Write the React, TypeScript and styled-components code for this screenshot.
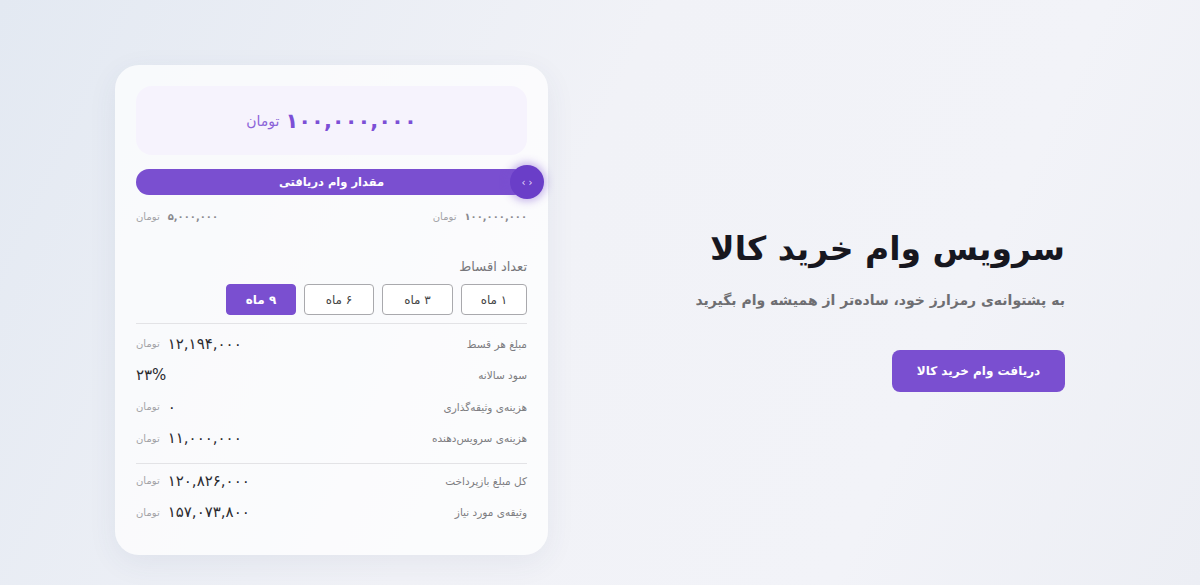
import React from 'react';
import styled, { createGlobalStyle } from 'styled-components';

const GlobalStyle = createGlobalStyle`
    html, body {
        margin: 0;
        padding: 0;
    }
    body {
        font-family: "DejaVu Sans", "Noto Sans", sans-serif;
        background: linear-gradient(115deg, #e3e9f2 0%, #f1f2f7 45%, #f2f3f8 75%, #eceef4 100%);
        min-height: 585px;
    }
`;

const PURPLE = '#7a4fd0';

const Page = styled.main`
    direction: rtl;
    height: 585px;
    display: flex;
    align-items: center;
    justify-content: space-between;
    padding: 35px 135px 0 115px;
    box-sizing: border-box;
`;

const Hero = styled.section`
    display: flex;
    flex-direction: column;
    align-items: flex-start;
`;

const Title = styled.h1`
    margin: 0;
    font-size: 33px;
    font-weight: 700;
    color: #17171f;
    line-height: 1.3;
`;

const Subtitle = styled.p`
    margin: 22px 0 0;
    font-size: 14px;
    font-weight: 700;
    color: #6e6e72;
`;

const CtaButton = styled.button`
    margin-top: 42px;
    width: 173px;
    height: 42px;
    border: none;
    border-radius: 8px;
    background: ${PURPLE};
    color: #fff;
    font-family: inherit;
    font-size: 12px;
    font-weight: 700;
    cursor: pointer;
`;

const Card = styled.section`
    width: 433px;
    height: 490px;
    box-sizing: border-box;
    padding: 21px 21px;
    border-radius: 24px;
    background: rgba(255, 255, 255, 0.72);
    box-shadow: 0 8px 30px rgba(60, 70, 110, 0.07);
    display: flex;
    flex-direction: column;
`;

const AmountBox = styled.div`
    height: 69px;
    border-radius: 16px;
    background: #f6f3fd;
    display: flex;
    align-items: center;
    justify-content: center;
    gap: 6px;
`;

const BigNumber = styled.span`
    font-size: 21px;
    font-weight: 700;
    color: #7c4fd6;
`;

const BigUnit = styled.span`
    font-size: 14px;
    color: #8b63d8;
`;

const SliderWrap = styled.div`
    position: relative;
    margin-top: 14px;
`;

const SliderBar = styled.div`
    height: 26px;
    border-radius: 13px;
    background: ${PURPLE};
    color: #fff;
    font-size: 11.5px;
    font-weight: 700;
    display: flex;
    align-items: center;
    justify-content: center;
`;

const Thumb = styled.div`
    position: absolute;
    top: 50%;
    right: -17px;
    width: 34px;
    height: 34px;
    margin-top: -17px;
    border-radius: 50%;
    background: #6a3ec8;
    box-shadow: 0 0 8px 2px rgba(122, 79, 208, 0.45);
    color: #e9defc;
    font-size: 10px;
    display: flex;
    align-items: center;
    justify-content: center;
    direction: ltr;
    gap: 3px;
`;

const RangeRow = styled.div`
    margin-top: 16px;
    display: flex;
    justify-content: space-between;
    align-items: center;
`;

const MoneyGroup = styled.span`
    display: flex;
    align-items: center;
    gap: 8px;
`;

const SmallNumber = styled.span`
    font-size: 10px;
    font-weight: 700;
    color: #8a8a8e;
`;

const Unit = styled.span`
    font-size: 10px;
    color: #a2a2a6;
`;

const SectionLabel = styled.div`
    margin-top: 37px;
    font-size: 13px;
    color: #77777b;
`;

const Periods = styled.div`
    margin-top: 10px;
    display: flex;
    gap: 8px;
`;

const PeriodButton = styled.button<{ $active?: boolean; $w: number }>`
    width: ${p => p.$w}px;
    height: 31px;
    border-radius: 4px;
    font-family: inherit;
    font-size: 12px;
    font-weight: ${p => (p.$active ? 700 : 400)};
    border: 1px solid ${p => (p.$active ? PURPLE : '#a9a9ad')};
    background: ${p => (p.$active ? PURPLE : '#fff')};
    color: ${p => (p.$active ? '#fff' : '#444')};
    padding: 0;
`;

const Divider = styled.hr<{ $top: number }>`
    margin: ${p => p.$top}px 0 0;
    border: none;
    border-top: 1px solid #e3e3e6;
`;

const Rows = styled.div<{ $top: number }>`
    margin-top: ${p => p.$top}px;
    display: flex;
    flex-direction: column;
`;

const Row = styled.div`
    height: 31.5px;
    display: flex;
    justify-content: space-between;
    align-items: center;
`;

const RowLabel = styled.span`
    font-size: 10.5px;
    color: #7d7d81;
`;

const RowNumber = styled.span`
    font-size: 15px;
    font-weight: 500;
    color: #2b2b30;
`;

type RowData = { label: string; value: string; unit?: boolean };

const details: RowData[] = [
    { label: 'مبلغ هر قسط', value: '۱۲,۱۹۴,۰۰۰', unit: true },
    { label: 'سود سالانه', value: '۲۳%' },
    { label: 'هزینه‌ی وثیقه‌گذاری', value: '۰', unit: true },
    { label: 'هزینه‌ی سرویس‌دهنده', value: '۱۱,۰۰۰,۰۰۰', unit: true },
];

const totals: RowData[] = [
    { label: 'کل مبلغ بازپرداخت', value: '۱۲۰,۸۲۶,۰۰۰', unit: true },
    { label: 'وثیقه‌ی مورد نیاز', value: '۱۵۷,۰۷۳,۸۰۰', unit: true },
];

const periods = [
    { label: '۱ ماه', w: 66 },
    { label: '۳ ماه', w: 71 },
    { label: '۶ ماه', w: 70 },
    { label: '۹ ماه', w: 70, active: true },
];

function DetailRow({ label, value, unit }: RowData) {
    return (
        <Row>
            <RowLabel>{label}</RowLabel>
            <MoneyGroup>
                <RowNumber>{value}</RowNumber>
                {unit && <Unit>تومان</Unit>}
            </MoneyGroup>
        </Row>
    );
}

export default function App() {
    return (
        <>
            <GlobalStyle />
            <Page>
                <Hero>
                    <Title>سرویس وام خرید کالا</Title>
                    <Subtitle>به پشتوانه‌ی رمزارز خود، ساده‌تر از همیشه وام بگیرید</Subtitle>
                    <CtaButton>دریافت وام خرید کالا</CtaButton>
                </Hero>

                <Card>
                    <AmountBox>
                        <BigNumber>۱۰۰,۰۰۰,۰۰۰</BigNumber>
                        <BigUnit>تومان</BigUnit>
                    </AmountBox>

                    <SliderWrap>
                        <SliderBar>مقدار وام دریافتی</SliderBar>
                        <Thumb>
                            <span>‹</span>
                            <span>›</span>
                        </Thumb>
                    </SliderWrap>

                    <RangeRow>
                        <MoneyGroup>
                            <SmallNumber>۱۰۰,۰۰۰,۰۰۰</SmallNumber>
                            <Unit>تومان</Unit>
                        </MoneyGroup>
                        <MoneyGroup>
                            <SmallNumber>۵,۰۰۰,۰۰۰</SmallNumber>
                            <Unit>تومان</Unit>
                        </MoneyGroup>
                    </RangeRow>

                    <SectionLabel>تعداد اقساط</SectionLabel>
                    <Periods>
                        {periods.map(p => (
                            <PeriodButton key={p.label} $w={p.w} $active={p.active}>
                                {p.label}
                            </PeriodButton>
                        ))}
                    </Periods>

                    <Divider $top={8} />
                    <Rows $top={4}>
                        {details.map(d => <DetailRow key={d.label} {...d} />)}
                    </Rows>

                    <Divider $top={9} />
                    <Rows $top={1}>
                        {totals.map(d => <DetailRow key={d.label} {...d} />)}
                    </Rows>
                </Card>
            </Page>
        </>
    );
}
